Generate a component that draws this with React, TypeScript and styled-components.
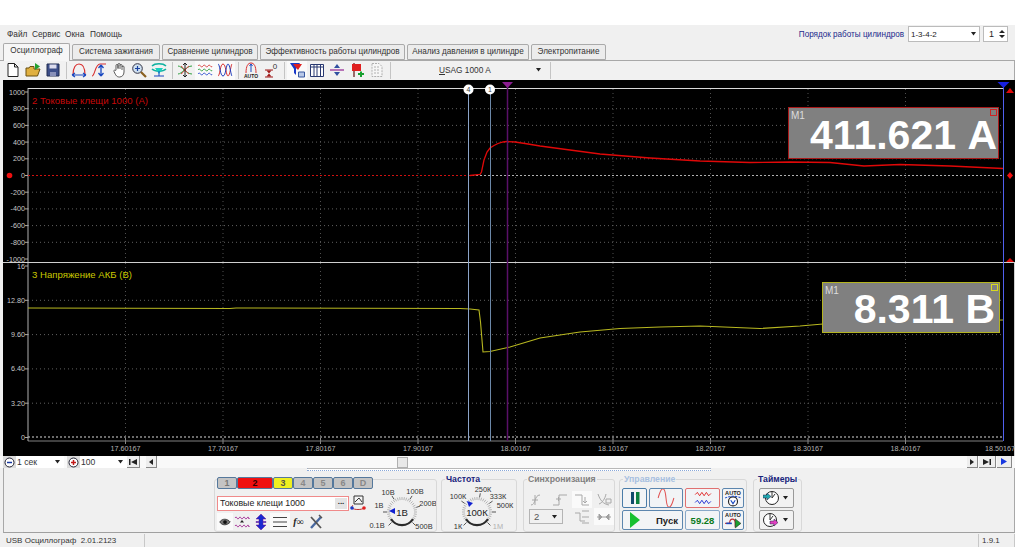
import React from 'react';
import styled, { createGlobalStyle } from 'styled-components';

const GlobalStyle = createGlobalStyle`
  html, body { margin: 0; padding: 0; background: #fff; }
  body { font-family: "Liberation Sans", Arial, sans-serif; font-size: 9px; color: #222; }
`

const Window = styled.div`
  width: 1015px;
  height: 522px;
  margin-top: 25px;
  background: #f0f0f0;
  display: flex;
  flex-direction: column;
  overflow: hidden;
`

const TopBar = styled.div`
  height: 18px;
  display: flex;
  align-items: center;
  padding: 1px 7px 0 7px;
  box-sizing: border-box;
`

const MenuItem = styled.span<{ $w: number }>`
  width: ${p => p.$w}px;
  font-size: 8.3px;
  color: #333;
`

const OrderLabel = styled.span`
  margin-left: auto;
  font-size: 8.15px;
  color: #1c2a8c;
  margin-right: 4px;
`

const OrderSelect = styled.div`
  width: 72px;
  height: 16px;
  box-sizing: border-box;
  border: 1px solid #bbb;
  background: #fff;
  font-size: 8px;
  padding: 1px 2px;
  display: flex;
  align-items: center;
  justify-content: space-between;
`

const Spinner = styled(OrderSelect)`
  width: 25px;
  margin-left: 3px;
  font-size: 9px;
  padding-left: 5px;
`

const TabRow = styled.div`
  height: 17px;
  display: flex;
  align-items: flex-end;
  padding-left: 3px;
  border-bottom: 1px solid #a8a8a8;
`

const Tab = styled.div<{ $w: number; $active?: boolean }>`
  width: ${p => p.$w}px;
  height: ${p => (p.$active ? 18 : 16)}px;
  box-sizing: border-box;
  margin-right: 2px;
  margin-bottom: ${p => (p.$active ? -1 : 0)}px;
  border: 1px solid #aaa;
  border-bottom: ${p => (p.$active ? 'none' : '1px solid #aaa')};
  border-radius: 2px 2px 0 0;
  background: ${p => (p.$active ? '#f6f6f6' : '#ececec')};
  font-size: 8.15px;
  color: #333;
  text-align: center;
  line-height: 14px;
  white-space: nowrap;
  position: relative;
`

const Toolbar = styled.div`
  height: 20px;
  display: flex;
  align-items: center;
  padding-left: 3px;
  background: #f1f1f1;
  border-right: 1px solid #a8a8a8;
`

const IconSlot = styled.div<{ $on?: boolean }>`
  width: 20px;
  height: 19px;
  display: flex;
  align-items: center;
  justify-content: center;
  background: ${p => (p.$on ? '#fafafa' : 'transparent')};
`

const Sep = styled.div`
  width: 1px;
  height: 17px;
  background: #c4c4c4;
  margin: 0 2px 0 3px;
`

const ProbeCombo = styled.div`
  width: 154px;
  height: 19px;
  display: flex;
  align-items: center;
  font-size: 8.3px;
  color: #333;
  padding: 0 5px 0 46px;
  box-sizing: border-box;
  justify-content: space-between;
`

const Scope = styled.div`
  position: relative;
  height: 376px;
  margin-left: 3px;
  background: #000;
`

const ScopeSvg = styled.svg`
  display: block;
  width: 1012px;
  height: 376px;
  font-family: "Liberation Sans", Arial, sans-serif;
`

const Readout = styled.div<{ $x: number; $y: number; $w: number; $h: number; $c: string; $pr: number }>`
  position: absolute;
  left: ${p => p.$x - 3}px;
  top: ${p => p.$y - 80}px;
  width: ${p => p.$w}px;
  height: ${p => p.$h}px;
  box-sizing: border-box;
  background: #808080;
  border: 1px solid ${p => p.$c};
  color: #fff;
  font-weight: bold;
  font-size: 41px;
  line-height: ${p => p.$h - 2}px;
  text-align: right;
  padding-right: ${p => p.$pr}px;
  padding-top: 2px;
  white-space: nowrap;
`

const ReadoutTag = styled.span`
  position: absolute;
  left: 2px;
  top: 2px;
  font-size: 10px;
  line-height: 11px;
  font-weight: normal;
  color: #ddd;
`

const ReadoutClose = styled.span<{ $c: string }>`
  position: absolute;
  right: 1px;
  top: 1px;
  width: 5px;
  height: 5px;
  border: 1px solid ${p => p.$c};
`

const ScrollRow = styled.div`
  height: 12px;
  display: flex;
  align-items: center;
  background: #f9f9f9;
  position: relative;
`

const ZoomBtn = styled.div`
  width: 13px;
  height: 12px;
  background: #dcdcdc;
  display: flex;
  align-items: center;
  justify-content: center;
  margin-left: 3px;
  flex: none;
`

const ZoomCombo = styled.div<{ $w: number }>`
  width: ${p => p.$w}px;
  height: 12px;
  background: #fff;
  font-size: 8.6px;
  padding: 0 3px 0 1px;
  box-sizing: border-box;
  display: flex;
  align-items: center;
  justify-content: space-between;
  flex: none;
  color: #333;
`

const NavBtn = styled.div<{ $w: number; $ml?: number }>`
  width: ${p => p.$w}px;
  height: 12px;
  margin-left: ${p => p.$ml ?? 0}px;
  box-sizing: border-box;
  background: #eee;
  border-right: 1px solid #888;
  border-bottom: 1px solid #888;
  display: flex;
  align-items: center;
  justify-content: center;
  flex: none;
`

const Thumb = styled.div`
  position: absolute;
  left: 397px;
  top: 1px;
  width: 11px;
  height: 11px;
  box-sizing: border-box;
  background: #e8e8e8;
  border: 1px solid #b0b0b0;
`

const Panel = styled.div`
  height: 65px;
  box-sizing: border-box;
  margin-left: 3px;
  border-left: 1px solid #a8a8a8;
  border-right: 1px solid #a8a8a8;
  border-bottom: 1px solid #a0a0a0;
  padding-left: 210px;
  position: relative;
`

const Track = styled.div`
  position: absolute;
  left: 303px;
  top: 0;
  width: 404px;
  height: 3px;
  border: 1px dotted #8aa8d8;
  border-top: 1px solid #b8b8b8;
  box-sizing: border-box;
  background: #fff;
`

const Groups = styled.div`
  display: flex;
  padding-top: 11px;
`

const GroupBox = styled.div<{ $w: number; $ml?: number }>`
  width: ${p => p.$w}px;
  height: 53px;
  margin-left: ${p => p.$ml ?? 0}px;
  box-sizing: border-box;
  border: 1px solid #d8d8d8;
  border-radius: 3px;
  flex: none;
`

const Legend = styled.div<{ $c: string; $ml: number }>`
  margin: -6px 0 0 ${p => p.$ml}px;
  width: fit-content;
  height: 10px;
  line-height: 10px;
  background: #f0f0f0;
  font-size: 8.7px;
  font-weight: bold;
  color: ${p => p.$c};
  padding: 0 1px;
`

const ChannelBody = styled.div`
  display: flex;
`

const ChannelLeft = styled.div`
  width: 152px;
  margin-top: -3px;
  padding-left: 2px;
  box-sizing: border-box;
`

const ChannelBtns = styled.div`
  display: flex;
  height: 12px;
`

const ChannelBtn = styled.div<{ $w: number; $bg: string; $c: string }>`
  width: ${p => p.$w}px;
  height: 12px;
  box-sizing: border-box;
  border: 1px solid #55789c;
  border-radius: 2px;
  background: ${p => p.$bg};
  color: ${p => p.$c};
  font-size: 9px;
  font-weight: bold;
  line-height: 10px;
  text-align: center;
  flex: none;
`

const InputRow = styled.div`
  display: flex;
  align-items: center;
  margin-top: 6px;
  height: 16px;
`

const ChannelInput = styled.div`
  width: 132px;
  height: 15px;
  box-sizing: border-box;
  border: 1px solid #f08a8a;
  background: #fff;
  font-size: 8.8px;
  color: #222;
  padding-left: 2px;
  line-height: 13px;
  display: flex;
  justify-content: space-between;
  flex: none;
`

const DotsBtn = styled.span`
  width: 12px;
  height: 11px;
  margin: 1px 1px 0 0;
  background: #e4e4e4;
  font-size: 8px;
  line-height: 8px;
  text-align: center;
  font-weight: bold;
`

const SmallRow = styled.div`
  display: flex;
  align-items: center;
  margin-top: 2px;
  height: 17px;
`

const SmallIcon = styled.div<{ $w?: number; $on?: boolean }>`
  width: ${p => p.$w ?? 17}px;
  height: 17px;
  display: flex;
  align-items: center;
  justify-content: center;
  background: ${p => (p.$on ? '#fafafa' : 'transparent')};
  flex: none;
`

const FxMark = styled.i`
  font-family: "Liberation Serif", serif;
  font-weight: bold;
  font-size: 10px;
`

const KnobShift = styled.div`
  margin-top: -4px;
`

const SyncGrid = styled.div`
  display: grid;
  grid-template-columns: 22px 22px 22px 22px;
  grid-auto-rows: 17px;
  padding: 7px 0 0 3px;
  justify-items: center;
  align-items: center;
`

const SyncCombo = styled.div`
  grid-column: span 2;
  justify-self: start;
  margin-left: 2px;
  width: 34px;
  height: 15px;
  box-sizing: border-box;
  border: 1px solid #b4b4b4;
  font-size: 9.5px;
  color: #555;
  padding: 0 4px;
  display: flex;
  align-items: center;
  justify-content: space-between;
`

const CtlGrid = styled.div`
  display: grid;
  grid-template-columns: 25px 34px 35px 22px;
  grid-template-rows: 20px 20px;
  gap: 2px 2px;
  padding: 4px 0 0 2px;
`

const CtlBtn = styled.div<{ $span?: number; $line?: string }>`
  grid-column: span ${p => p.$span ?? 1};
  box-sizing: border-box;
  border: 1px solid ${p => p.$line ?? '#5c86ae'};
  border-radius: 2px;
  background: #f2f4f6;
  display: flex;
  align-items: center;
  justify-content: center;
  gap: 13px;
  font-size: 9.5px;
  font-weight: bold;
  color: #222;
`

const RateText = styled.span`
  color: #0a7a1c;
  font-size: 9.5px;
  font-weight: bold;
`

const TimerCol = styled.div`
  display: flex;
  flex-direction: column;
  gap: 2px;
  padding: 4px 0 0 5px;
`

const TimerBtn = styled.div`
  width: 35px;
  height: 20px;
  box-sizing: border-box;
  border: 1px solid #9a9a9a;
  border-radius: 2px;
  background: #f2f2f2;
  display: flex;
  align-items: center;
  justify-content: space-around;
  padding: 0 3px 0 1px;
`

const StatusBar = styled.div`
  height: 14px;
  display: flex;
  align-items: center;
  font-size: 8px;
  color: #333;
  background: #f0f0f0;
`

const StatusCell = styled.div<{ $w: number; $pl?: number }>`
  width: ${p => p.$w}px;
  height: 13px;
  line-height: 13px;
  box-sizing: border-box;
  border-right: 1px solid #c8c8c8;
  padding-left: ${p => p.$pl ?? 6}px;
  flex: none;
`

const ArrowDown = () => (
  <svg width="7" height="4" viewBox="0 0 7 4"><path d="M1 0h5L3.5 3.5z" fill="#222" /></svg>
);

const tools: Record<string, React.ReactNode> = {
  new: <path d="M3 1.500h6.500L13 5v9.500H3z M9.500 1.500V5H13" fill="#fff" stroke="#222" />,
  open: <><path d="M1 14V6h3l1-1.500h4V7h4l2 0-2.500 7z" fill="#e0b040" stroke="#6a5010" /><path d="M10 1l5 3.500-5 3.500z" fill="#22a030" /></>,
  save: <><path d="M2 2h12v12H2z" fill="#3c4e88" stroke="#202c50" /><path d="M4.500 2.500h7v4h-7z" fill="#dde" /><path d="M5 10h6v4H5z" fill="#8890b8" /></>,
  arc: <><path d="M2 13C2 5 5 2 8 2s6 3 6 11" fill="none" stroke="#d83030" strokeWidth="1.200" /><path d="M1 13h14M1 13l3-2M1 13l3 2M15 13l-3-2M15 13l-3 2" stroke="#1848c0" strokeWidth="1.200" fill="none" /></>,
  rise: <><path d="M1 14C4 14 4 2 9 2h6" fill="none" stroke="#d83030" strokeWidth="1.100" /><path d="M10 3v11M10 3L7.500 6M10 3l2.500 3M10 14l-2.500-3M10 14l2.500-3" stroke="#1848c0" strokeWidth="1.300" fill="none" /></>,
  zoom: <><circle cx="6.500" cy="6.500" r="4.800" fill="#cfe0f0" stroke="#334" /><path d="M4 6.500h5M6.500 4v5" stroke="#1840a0" strokeWidth="1.200" /><path d="M10 10l5 5" stroke="#8a6020" strokeWidth="2.200" /></>,
  teal: <><path d="M1 4c3-3 11-3 14 0M1 7c3 3 11 3 14 0" fill="none" stroke="#10b0a0" strokeWidth="1.500" /><path d="M4 6h8l-4 6z" fill="#18d0c0" /><path d="M3 14h10M8 9v5" stroke="#1848c0" /></>,
  cross: <><path d="M1 4c4 0 8 8 14 8M1 12c4 0 8-8 14-8" fill="none" stroke="#30a040" /><path d="M4 4c3 2 5 6 8 8M12 4c-3 2-5 6-8 8" fill="none" stroke="#d84040" /><path d="M8 1v14M8 1L6 3M8 1l2 2M8 15l-2-2M8 15l2-2" fill="none" stroke="#222" /></>,
  waves: <><path d="M1 4c2-3 3 3 5 0s3 3 5 0 3 3 4 0" fill="none" stroke="#d84040" /><path d="M1 8c2-3 3 3 5 0s3 3 5 0 3 3 4 0" fill="none" stroke="#30a040" /><path d="M1 12c2-3 3 3 5 0s3 3 5 0 3 3 4 0" fill="none" stroke="#3050d0" /></>,
  lobes: <><path d="M1 14C3 14 3 2 6 2s3 12 5 12 3-12 4-12" fill="none" stroke="#d83030" /><path d="M1 2C3 2 3 14 6 14S9 2 11 2s3 12 4 12" fill="none" stroke="#2040c0" /></>,
  auto: <><path d="M3 11C3 4 5 1 8 1s5 3 5 10" fill="none" stroke="#d83030" /><path d="M8 2v8M8 2L6.500 4M8 2l1.500 2" stroke="#1848c0" fill="none" /><text x="8" y="15.500" fontSize="5" fontWeight="bold" textAnchor="middle" fill="#222">AUTO</text></>,
  zero: <><path d="M2 8h8M2 15h8" stroke="#a01818" /><path d="M3.500 8.500h5L6 11.500zM3.500 14.500h5L6 11.500z" fill="#a01818" /><text x="12" y="7" fontSize="8" textAnchor="middle" fill="#333">0</text></>,
  funnel: <><path d="M1 1h10L7 7v6L5 11V7z" fill="#1838c8" /><path d="M4 2h9L9 8z" fill="#e02020" /><path d="M9.500 10h6v5h-6z" fill="#b8c8e8" stroke="#3858a0" /></>,
  table: <><path d="M1.500 2.500h13v12h-13z" fill="#fff" stroke="#283870" /><path d="M1.500 5h13M5 3v11M8 3v11M11.500 3v11" stroke="#283870" /></>,
  divide: <><path d="M1 8h14" stroke="#902090" strokeWidth="1.200" /><path d="M8 2L5 6h6zM8 14l-3-4h6z" fill="#3050a0" /></>,
  flag: <><path d="M5 1v14" stroke="#601010" strokeWidth="1.200" /><path d="M3 2h9v7H3z" fill="#e02020" /><path d="M9 12h6M12 9.500v5.500" stroke="#18a030" strokeWidth="2" /></>,
  page: <path d="M3 1.500h7L13 4.500v10H3z M5 5h5M5 8h6M5 11h6" fill="#f6f6f6" stroke="#b0b0b0" strokeDasharray="2 1" />,
  hand: <path d="M5 8V3.500a1 1 0 0 1 2 0V7m0-1V2.500a1 1 0 0 1 2 0V7m0-3.500a1 1 0 0 1 2 0V8m0-3a1 1 0 0 1 2 0v5c0 3-2 5-4.500 5S5 14 3 9.500c-.5-1.500 1-2 2-.5" fill="#fff" stroke="#333" strokeWidth=".8" />,
  eye: <><path d="M1 8c3-5 10-5 14 0-4 5-11 5-14 0z" fill="#777" stroke="#222" /><circle cx="8" cy="8" r="2.500" fill="#111" /></>,
  waveMix: <><path d="M1 4c2-3 2 3 4 0s2 3 4 0 2 3 4 0 2 3 2 0" fill="none" stroke="#a02090" /><path d="M1 12c2-3 2 3 4 0s2 3 4 0 2 3 4 0 2 3 2 0" fill="none" stroke="#a02090" /><path d="M8 6L6 8.500h4z" fill="#222" /></>,
  updown: <path d="M8 0l5 5h-3v2.500h3V8.500h-3V11h3l-5 5-5-5h3V8.500H3v-1h3V5H3z" fill="#1828d0" stroke="#701090" strokeWidth=".5" />,
  lines: <path d="M1 3.500h14M1 8h14M1 12.500h14" stroke="#444" />,
  tools: <><path d="M3 14L13 3" stroke="#4868a0" strokeWidth="2.400" /><path d="M3 3l10 11" stroke="#555" strokeWidth="1.800" /><path d="M11 1l3 3" stroke="#555" strokeWidth="1.500" /></>,
  probe: <><path d="M4 1h9v8H4z" fill="#f4f4f4" stroke="#333" /><path d="M5 7l4-4 3 4" stroke="#333" fill="none" /><path d="M2 13c2 2 10 2 12 0M3 10C2 11 2 12 2 13" stroke="#c03030" fill="none" /><circle cx="2" cy="13" r="1.800" fill="#1838c8" /><circle cx="14" cy="13" r="1.800" fill="#e02020" /></>,
  sine: <path d="M1 8c3-11 6-11 7 0s4 11 7 0" fill="none" stroke="#e05050" strokeWidth=".9" />,
  fft: <><path d="M1 5l2-2 2 3 2-3 2 3 2-3 2 3 2-2" fill="none" stroke="#e02020" strokeWidth=".8" /><path d="M1 12l2-2 2 3 2-3 2 3 2-3 2 3 2-2" fill="none" stroke="#1828d0" strokeWidth=".8" /></>,
  autoV: <><text x="8" y="5" fontSize="5" fontWeight="bold" textAnchor="middle" fill="#222">AUTO</text><circle cx="8" cy="11" r="4" fill="#fff" stroke="#222" /><path d="M1 8c4-2 10-2 14 0" fill="none" stroke="#2050d0" strokeDasharray="2 1" /><path d="M6 10l2 3 2-3" fill="none" stroke="#1848c0" /></>,
  autoRun: <><text x="8" y="5" fontSize="5" fontWeight="bold" textAnchor="middle" fill="#222">AUTO</text><path d="M1 11h4c0-5 5-5 5 0v3" fill="none" stroke="#c03030" /><path d="M2 11h5" stroke="#1848c0" strokeWidth="1.400" /><path d="M10 7l5 4-5 4z" fill="#18a030" stroke="#222" strokeWidth=".5" /></>,
  pause: <><rect x="4" y="2" width="3" height="12" fill="#104a6c" /><rect x="9" y="2" width="3.500" height="12" fill="#0c8040" /></>,
  play: <path d="M3 0l10 8-10 8z" fill="#18c030" />,
  timerA: <><circle cx="9" cy="8" r="6.500" fill="#fff" stroke="#222" /><path d="M9 8l3-4M9 8V2" stroke="#333" /><path d="M0 5h4V3l4 3.500L4 10V8H0z" fill="#20a8b0" stroke="#224" strokeWidth=".5" /></>,
  timerB: <><circle cx="7" cy="8" r="6.500" fill="#fff" stroke="#222" /><path d="M7 8l3-4M7 8V2" stroke="#333" /><path d="M7 9h4V7l4 3.500L11 14v-2H7z" fill="#e040c0" stroke="#224" strokeWidth=".5" /></>,
  edgeUp: <path d="M1 13c5 0 3-10 9-10M5 13V3M2 8h6" fill="none" stroke="#a8a8a8" />,
  stepUp: <path d="M1 13h6V3h8M4 7h5M6.500 5v4" fill="none" stroke="#a8a8a8" />,
  stepDown: <path d="M1 3h7v10h7M11 5v6M9 9l2 2 2-2" fill="none" stroke="#a8a8a8" />,
  edgeMix: <path d="M2 2c2 6 5 10 11 11M3 12c3-1 6-5 7-10M10 7h5v4h-5z" fill="none" stroke="#a8a8a8" />,
  level: <path d="M1 4h5v8h5M8 2h7M8 8h7M8 14h7" fill="none" stroke="#a8a8a8" />,
  merge: <path d="M1 8h14M3 5l3 3-3 3zM13 5l-3 3 3 3z" fill="#a0a0a0" stroke="#a0a0a0" />,
};

const Tool = ({ name, size = 16 }: { name: string; size?: number }) => (
  <svg width={size} height={size} viewBox="0 0 16 16" fontFamily="Liberation Sans, Arial, sans-serif">{tools[name]}</svg>
);

const tabs = [
  { t: 'Осциллограф', w: 67, a: true },
  { t: 'Система зажигания', w: 88 },
  { t: 'Сравнение цилиндров', w: 96 },
  { t: 'Эффективность работы цилиндров', w: 145 },
  { t: 'Анализ давления в цилиндре', w: 122 },
  { t: 'Электропитание', w: 75 },
];

const toolGroups = [
  ['new', 'open', 'save'],
  ['arc', 'rise', 'hand', 'zoom', 'teal'],
  ['cross', 'waves', 'lobes'],
  ['auto', 'zero'],
  ['funnel', 'table', 'divide', 'flag', 'page'],
];
const toolsOn = ['waves', 'lobes', 'funnel'];

const gridX = Array.from({ length: 10 }, (_, i) => 28 + 97.5 * i);
const ampLabels = [1000, 800, 600, 400, 200, 0, -200, -400, -600, -800, -1000];
const voltLabels = ['16', '12.80', '9.60', '6.40', '3.20', '0'];
const timeLabels = ['17.60167', '17.70167', '17.80167', '17.90167', '18.00167', '18.10167', '18.20167', '18.30167', '18.40167'];

const ampCurve = '470,175.500 480,174.500 481.500,172 484,160 487,152 490,148 494,145.500 498,143.500 503,142 507,141.500 515,142 525,143.500 540,146 570,150 600,154 650,158 700,161 750,162.500 790,162 830,162.500 864,166 900,164.500 950,166 1003,168.500';
const voltCurve = '28,308 230,308.500 236,308 460,308.500 470,309 479,310 480.500,322 482,340 483,352 490,351.500 510,347 540,338 580,332 620,328.500 660,327 700,326 760,328.500 800,326 823,324 1003,320';

function ScopeChart() {
  const ticksTop = ampLabels.map((_, i) => 92 + i * 16.7);
  const ticksBottom = voltLabels.map((_, i) => 266 + i * 34.3);
  return (
    <ScopeSvg viewBox="3 80 1012 376">
      {gridX.slice(1).map(x => (
        <React.Fragment key={x}>
          <line x1={x} x2={x} y1={89} y2={262} stroke="#505050" strokeDasharray="1 3" />
          <line x1={x} x2={x} y1={263} y2={440} stroke="#505050" strokeDasharray="1 3" />
          <line x1={x} x2={x} y1={438} y2={444} stroke="#888" />
        </React.Fragment>
      ))}
      {ticksTop.slice(1, -1).map(y => (
        <line key={y} x1={28} x2={1003} y1={y} y2={y} stroke={Math.abs(y - 175.5) < 1 ? '#b0b0b0' : '#606060'} strokeDasharray={Math.abs(y - 175.5) < 1 ? '2 2' : '1 3'} />
      ))}
      {ticksBottom.slice(1, -1).map(y => (
        <line key={y} x1={28} x2={1003} y1={y} y2={y} stroke="#606060" strokeDasharray="1 3" />
      ))}
      <line x1={28} x2={1003} y1={437} y2={437} stroke="#d8d8d8" strokeDasharray="2 2" />
      <line x1={28} x2={1003} y1={441} y2={441} stroke="#808080" />
      <line x1={28} x2={28} y1={88} y2={441} stroke="#b0b0b0" />
      <line x1={28} x2={1003} y1={88.500} y2={88.500} stroke="#d8d8d8" />
      <line x1={3} x2={1015} y1={262.500} y2={262.500} stroke="#d0d0d0" />
      <line x1={1014.500} x2={1014.500} y1={263} y2={456} stroke="#d0d0d0" />

      {ampLabels.map((v, i) => (
        <g key={v}>
          <line x1={25} x2={28} y1={ticksTop[i]} y2={ticksTop[i]} stroke="#aaa" />
          <text x={25} y={ticksTop[i] + 2.500} fontSize="7.200" textAnchor="end" fill="#c8c8c8">{v}</text>
        </g>
      ))}
      {voltLabels.map((v, i) => (
        <g key={v}>
          <line x1={25} x2={28} y1={ticksBottom[i]} y2={ticksBottom[i]} stroke="#aaa" />
          <text x={25} y={ticksBottom[i] + 2.500} fontSize="7.200" textAnchor="end" fill="#c8c8c8">{v}</text>
        </g>
      ))}
      {timeLabels.map((t, i) => (
        <text key={t} x={gridX[i + 1]} y={451} fontSize="7.200" textAnchor="middle" fill="#b4b4b4">{t}</text>
      ))}
      <text x={1015} y={451} fontSize="7.200" textAnchor="end" fill="#b4b4b4">18.50167</text>

      <text x={32} y={104} fontSize="9.600" fill="#c80808">2 Токовые клещи 1000 (А)</text>
      <text x={32} y={278} fontSize="9.600" fill="#c8c800">3 Напряжение АКБ (В)</text>

      <line x1={28} x2={470} y1={175.500} y2={175.500} stroke="#d01010" strokeDasharray="2 2" />
      <polyline points={ampCurve} fill="none" stroke="#e00808" strokeWidth="1.300" />
      <polyline points={voltCurve} fill="none" stroke="#b8b820" strokeWidth="1.100" />

      <line x1={468.500} x2={468.500} y1={89} y2={441} stroke="#8ba4c8" />
      <line x1={490.500} x2={490.500} y1={89} y2={441} stroke="#6c88a8" />
      <line x1={507.500} x2={507.500} y1={86} y2={441} stroke="#5a1068" strokeWidth="1.500" />
      <line x1={1003.500} x2={1003.500} y1={86} y2={441} stroke="#5060f0" />

      <circle cx={468.500} cy={89.500} r={5} fill="#fff" />
      <text x={468.500} y={92} fontSize="7" textAnchor="middle" fill="#444">4</text>
      <circle cx={490} cy={89.500} r={5} fill="#fff" />
      <text x={490} y={92} fontSize="7" textAnchor="middle" fill="#444">1</text>
      <path d="M502 82h11l-5.500 6z" fill="#8a1c90" />
      <path d="M997.500 82h12l-6 6z" fill="#1820e0" />
      <path d="M1006 93l4-5 4 5z" fill="#e00808" />
      <path d="M1006 262l4-4 4 4z" fill="#e00808" />
      <circle cx={9.500} cy={175.500} r={2.800} fill="#f01010" />
      <path d="M1010 172l3 3.500-3 3.500-3-3.500z" fill="#f01010" />
    </ScopeSvg>
  );
}

type KnobLabel = { t: string; x: number; y: number; off?: boolean };

const Knob = ({ value, labels, pointer, w, spokes }: { value: string; labels: KnobLabel[]; pointer: string; w: number; spokes: number[] }) => {
  const cx = 35;
  const cy = 32;
  const ticks = Array.from({ length: 31 }, (_, i) => -135 + i * 9);
  const ray = (a: number, r: number) => {
    const t = (a - 90) * Math.PI / 180;
    return { x: cx + Math.cos(t) * r, y: cy + Math.sin(t) * r };
  };
  return (
    <svg width={w} height={52} viewBox={`0 0 ${w} 52`} fontFamily="Liberation Sans, Arial, sans-serif">
      {ticks.map(a => (
        <line key={a} x1={ray(a, 12).x} y1={ray(a, 12).y} x2={ray(a, 15).x} y2={ray(a, 15).y} stroke="#b4b4b4" />
      ))}
      {spokes.map(a => (
        <line key={a} x1={ray(a, 15).x} y1={ray(a, 15).y} x2={ray(a, 19).x} y2={ray(a, 19).y} stroke="#555" />
      ))}
      <circle cx={cx} cy={cy} r={11.500} fill="#f0f0f0" />
      <path d={`M${cx - 11} ${cy + 7}A13 13 0 0 0 ${cx + 11} ${cy + 7}`} fill="none" stroke="#2a2a2a" strokeWidth="2.200" />
      <path d={pointer} fill="#1020d0" />
      <text x={cx} y={cy + 3.500} fontSize="9.600" textAnchor="middle" fill="#222">{value}</text>
      {labels.map(l => (
        <text key={l.t} x={l.x} y={l.y} fontSize="7.400" textAnchor="middle" fill={l.off ? '#b0b0b0' : '#333'}>{l.t}</text>
      ))}
    </svg>
  );
};

const voltKnob: KnobLabel[] = [
  { t: '10В', x: 21, y: 15 },
  { t: '100В', x: 48, y: 14 },
  { t: '1В', x: 12, y: 28 },
  { t: '200В', x: 61, y: 26 },
  { t: '0.1В', x: 10, y: 48 },
  { t: '500В', x: 57, y: 49 },
];

const freqKnob: KnobLabel[] = [
  { t: '250К', x: 41, y: 12 },
  { t: '100К', x: 16, y: 19 },
  { t: '333К', x: 56, y: 19 },
  { t: '500К', x: 63, y: 28 },
  { t: '1К', x: 16, y: 49 },
  { t: '1М', x: 56, y: 49, off: true },
];

export default function App() {
  return (
    <Window>
      <GlobalStyle />
      <TopBar>
        <MenuItem $w={25}>Файл</MenuItem>
        <MenuItem $w={33}>Сервис</MenuItem>
        <MenuItem $w={25}>Окна</MenuItem>
        <MenuItem $w={40}>Помощь</MenuItem>
        <OrderLabel>Порядок работы цилиндров</OrderLabel>
        <OrderSelect>1-3-4-2<ArrowDown /></OrderSelect>
        <Spinner>1<svg width="6" height="10" viewBox="0 0 6 10"><path d="M0 4l3-3 3 3zM0 6l3 3 3-3z" fill="#222" /></svg></Spinner>
      </TopBar>
      <TabRow>
        {tabs.map(tab => (
          <Tab key={tab.t} $w={tab.w} $active={tab.a}>{tab.t}</Tab>
        ))}
      </TabRow>
      <Toolbar>
        {toolGroups.map((group, i) => (
          <React.Fragment key={group[0]}>
            {group.map(name => (
              <IconSlot key={name} $on={toolsOn.includes(name)}><Tool name={name} /></IconSlot>
            ))}
            <Sep />
            {i === toolGroups.length - 1 && (
              <>
                <ProbeCombo>
                  <span><u>U</u>SAG 1000 A</span>
                  <ArrowDown />
                </ProbeCombo>
                <Sep />
              </>
            )}
          </React.Fragment>
        ))}
      </Toolbar>
      <Scope>
        <ScopeChart />
        <Readout $x={788} $y={107} $w={211} $h={52} $c="#a81818" $pr={1}>
          <ReadoutTag>M1</ReadoutTag>
          <ReadoutClose $c="#d02020" />
          411.621 А
        </Readout>
        <Readout $x={822} $y={282} $w={178} $h={51} $c="#b4b420" $pr={4}>
          <ReadoutTag>M1</ReadoutTag>
          <ReadoutClose $c="#d8d820" />
          8.311 В
        </Readout>
      </Scope>
      <ScrollRow>
        <ZoomBtn><svg width="11" height="11" viewBox="0 0 11 11"><circle cx="5.500" cy="5.500" r="4.500" fill="#fff" stroke="#223" /><path d="M3 5.500h5" stroke="#1838a0" strokeWidth="1.500" /></svg></ZoomBtn>
        <ZoomCombo $w={48}>1 сек<ArrowDown /></ZoomCombo>
        <ZoomBtn><svg width="11" height="11" viewBox="0 0 11 11"><circle cx="5.500" cy="5.500" r="4.500" fill="#fff" stroke="#223" /><path d="M3 5.500h5M5.500 3v5" stroke="#c01818" strokeWidth="1.500" /></svg></ZoomBtn>
        <ZoomCombo $w={47}>100<ArrowDown /></ZoomCombo>
        <NavBtn $w={13}><svg width="8" height="6" viewBox="0 0 8 6"><path d="M0 0h1.500v6H0zM8 0L2 3l6 3z" fill="#222" /></svg></NavBtn>
        <NavBtn $w={11} $ml={6}><svg width="4" height="6" viewBox="0 0 4 6"><path d="M4 0L0 3l4 3z" fill="#222" /></svg></NavBtn>
        <Thumb />
        <NavBtn $w={11} $ml={810}><svg width="4" height="6" viewBox="0 0 4 6"><path d="M0 0l4 3-4 3z" fill="#222" /></svg></NavBtn>
        <NavBtn $w={17} $ml={1}><svg width="8" height="6" viewBox="0 0 8 6"><path d="M0 0l6 3-6 3zM6.500 0H8v6H6.500z" fill="#222" /></svg></NavBtn>
        <NavBtn $w={15} $ml={1}><svg width="6" height="7" viewBox="0 0 6 7"><path d="M0 0l6 3.500L0 7z" fill="#1838e0" /></svg></NavBtn>
      </ScrollRow>
      <Panel>
        <Track />
        <Groups>
          <GroupBox $w={223}>
            <ChannelBody>
              <ChannelLeft>
                <ChannelBtns>
                  <ChannelBtn $w={20} $bg="#c4c4c4" $c="#777">1</ChannelBtn>
                  <ChannelBtn $w={36} $bg="#f01010" $c="#300">2</ChannelBtn>
                  <ChannelBtn $w={20} $bg="#f0f020" $c="#554">3</ChannelBtn>
                  <ChannelBtn $w={20} $bg="#c4c4c4" $c="#888">4</ChannelBtn>
                  <ChannelBtn $w={20} $bg="#c4c4c4" $c="#888">5</ChannelBtn>
                  <ChannelBtn $w={20} $bg="#c4c4c4" $c="#888">6</ChannelBtn>
                  <ChannelBtn $w={20} $bg="#c4c4c4" $c="#888">D</ChannelBtn>
                </ChannelBtns>
                <InputRow>
                  <ChannelInput>Токовые клещи 1000<DotsBtn>...</DotsBtn></ChannelInput>
                  <SmallIcon><Tool name="probe" /></SmallIcon>
                </InputRow>
                <SmallRow>
                  <SmallIcon $on $w={16}><Tool name="eye" size={12} /></SmallIcon>
                  <SmallIcon $w={18}><Tool name="waveMix" /></SmallIcon>
                  <SmallIcon $w={19}><Tool name="updown" /></SmallIcon>
                  <SmallIcon $on $w={20}><Tool name="lines" /></SmallIcon>
                  <SmallIcon $w={17}><FxMark>f∞</FxMark></SmallIcon>
                  <SmallIcon $w={18}><Tool name="tools" /></SmallIcon>
                </SmallRow>
              </ChannelLeft>
              <Knob
                w={69}
                value="1В"
                labels={voltKnob}
                pointer="M22 31l6-3v6z"
                spokes={[-135, -90, -32, 32, 72, 135]}
              />
            </ChannelBody>
          </GroupBox>
          <GroupBox $w={76} $ml={4}>
            <Legend $c="#18247c" $ml={3}>Частота</Legend>
            <KnobShift>
              <Knob
                w={74}
                value="100К"
                labels={freqKnob}
                pointer="M25 21l6 2-4 4z"
                spokes={[-135, -55, 10, 55, 90, 135]}
              />
            </KnobShift>
          </GroupBox>
          <GroupBox $w={92} $ml={6}>
            <Legend $c="#808080" $ml={3}>Синхронизация</Legend>
            <SyncGrid>
              <Tool name="edgeUp" />
              <Tool name="stepUp" />
              <SmallIcon $on $w={20}><Tool name="stepDown" /></SmallIcon>
              <Tool name="edgeMix" />
              <SyncCombo>2<ArrowDown /></SyncCombo>
              <Tool name="level" />
              <SmallIcon $on $w={20}><Tool name="merge" /></SmallIcon>
            </SyncGrid>
          </GroupBox>
          <GroupBox $w={128} $ml={4}>
            <Legend $c="#a8c0e0" $ml={3}>Управление</Legend>
            <CtlGrid>
              <CtlBtn $line="#4a7ca8"><Tool name="pause" /></CtlBtn>
              <CtlBtn><Tool name="sine" size={18} /></CtlBtn>
              <CtlBtn $line="#e07070"><Tool name="fft" size={18} /></CtlBtn>
              <CtlBtn><Tool name="autoV" size={18} /></CtlBtn>
              <CtlBtn $span={2}><Tool name="play" />Пуск</CtlBtn>
              <CtlBtn $line="#88a8c8"><RateText>59.28</RateText></CtlBtn>
              <CtlBtn><Tool name="autoRun" size={18} /></CtlBtn>
            </CtlGrid>
          </GroupBox>
          <GroupBox $w={49} $ml={6}>
            <Legend $c="#18247c" $ml={3}>Таймеры</Legend>
            <TimerCol>
              <TimerBtn><Tool name="timerA" /><ArrowDown /></TimerBtn>
              <TimerBtn><Tool name="timerB" /><ArrowDown /></TimerBtn>
            </TimerCol>
          </GroupBox>
        </Groups>
      </Panel>
      <StatusBar>
        <StatusCell $w={145}>USB Осциллограф&nbsp;&nbsp;2.01.2123</StatusCell>
        <StatusCell $w={834} />
        <StatusCell $w={36} $pl={3}>1.9.1</StatusCell>
      </StatusBar>
    </Window>
  );
}
